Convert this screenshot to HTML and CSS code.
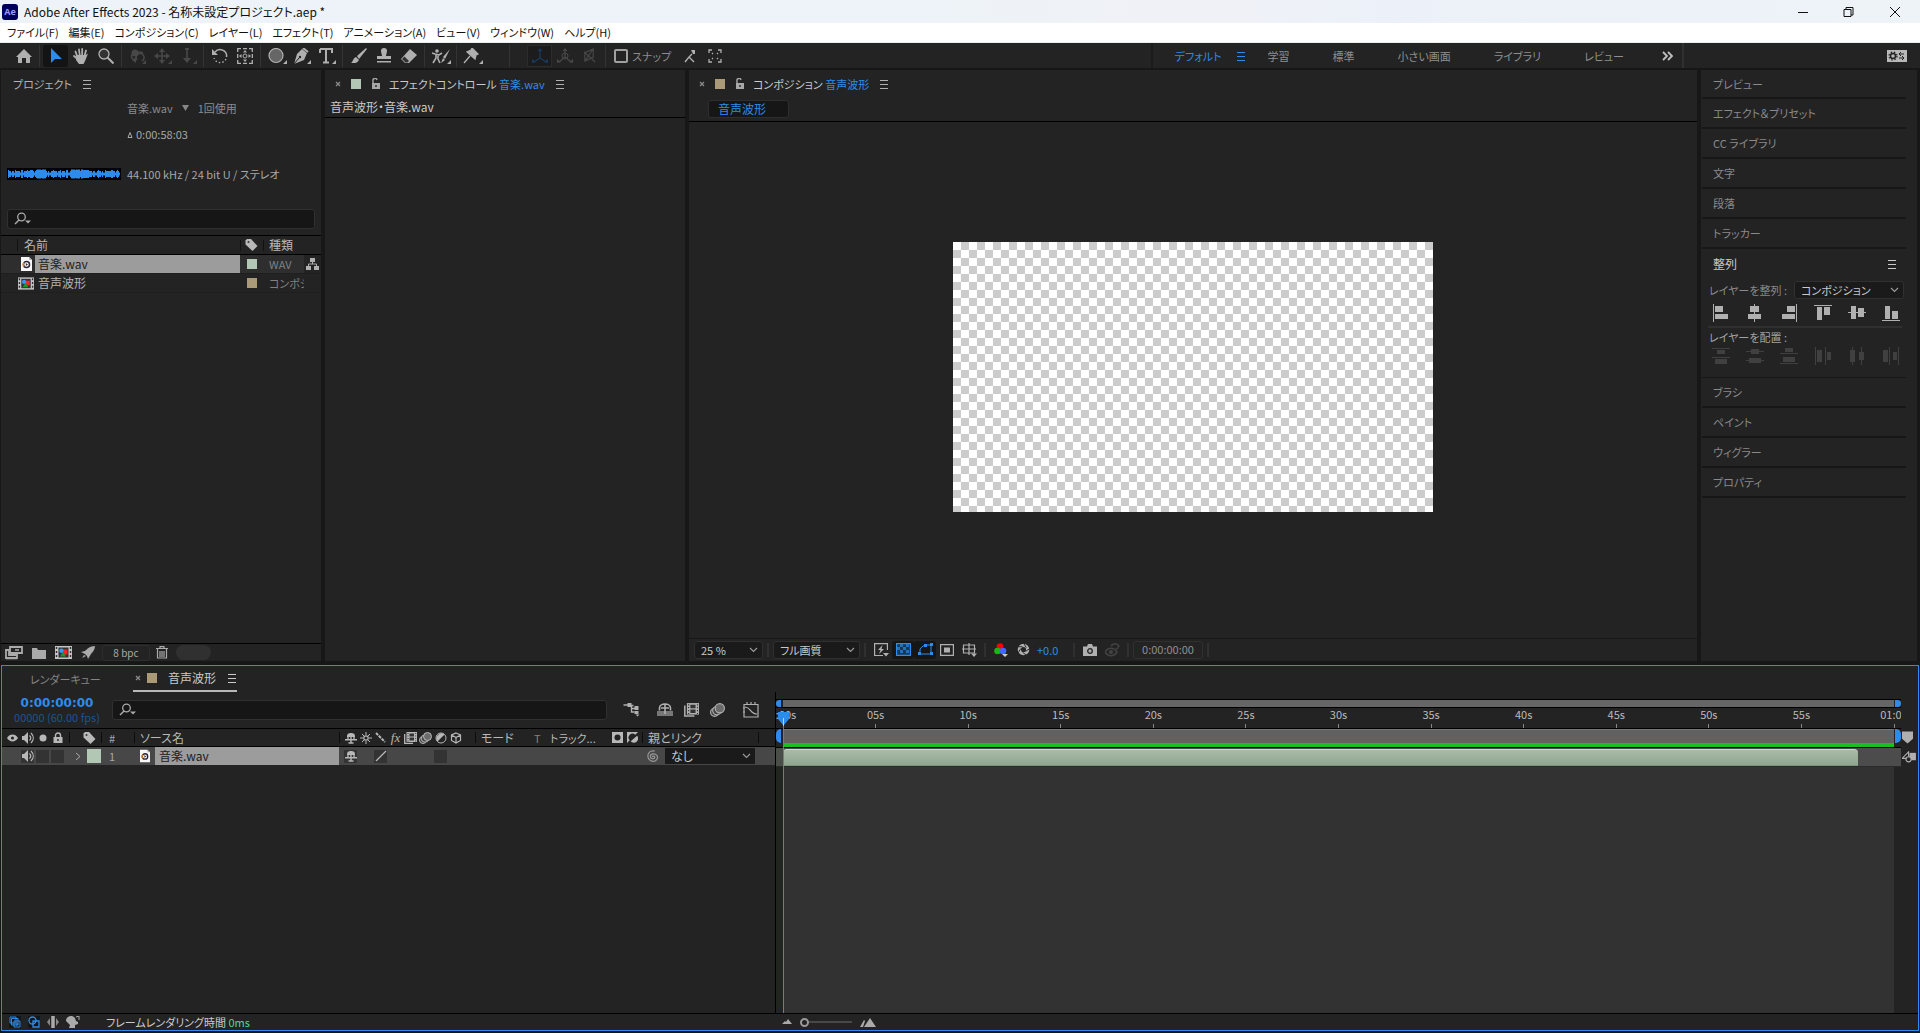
FILE: index.html
```html
<!DOCTYPE html>
<html lang="ja">
<head>
<meta charset="utf-8">
<title>Adobe After Effects 2023 - 名称未設定プロジェクト.aep *</title>
<link rel="stylesheet" href="styles.css">
</head>
<body>
<svg class="defs" aria-hidden="true">
  <symbol id="menu" viewBox="0 0 10 10"><path d="M1 1.500h8M1 5.500h8M1 9.500h8" stroke="currentColor"/></symbol>
  <symbol id="close" viewBox="0 0 10 10"><path d="M3 3l4 4M7 3l-4 4" stroke="currentColor" stroke-width="1.200"/></symbol>
  <symbol id="unlock" viewBox="0 0 10 12"><path d="M1 5h8v6H1z" fill="currentColor"/><path d="M2 5V3a2 2 0 0 1 4-1" fill="none" stroke="currentColor" stroke-width="1.400"/><path d="M5 7v2" stroke="#232323" stroke-width="1.400"/></symbol>
  <symbol id="lock" viewBox="0 0 10 12"><path d="M0.500 5h9v6h-9z" fill="currentColor"/><path d="M2.500 5V3.500a2.500 2.500 0 0 1 5 0V5" fill="none" stroke="currentColor" stroke-width="1.400"/><path d="M5 7v2" stroke="#232323" stroke-width="1.400"/></symbol>
  <symbol id="search" viewBox="0 0 18 14"><circle cx="7.500" cy="5" r="3.800" fill="none" stroke="currentColor" stroke-width="1.300"/><path d="M5 8l-4 4" stroke="currentColor" stroke-width="1.500"/><path d="M11 8.500h6l-3 3z" fill="currentColor"/></symbol>
  <symbol id="tag" viewBox="0 0 12 12"><path d="M0 1.500L1.500 0H5.500L12 7 7 12 0 5.500z" fill="currentColor"/><circle cx="3" cy="3" r="1" fill="#333"/></symbol>
  <symbol id="wavfile" viewBox="0 0 11 14"><path d="M0 0h8l3 3v11H0z" fill="#f8f8f8"/><path d="M8 0v3h3z" fill="#bbb"/><circle cx="5.500" cy="7.500" r="3" fill="#fff" stroke="#2a2038" stroke-width="1.500"/><path d="M3 9.500a3 3 0 0 1 0-4" fill="none" stroke="#e08030" stroke-width="1.300"/><path d="M4.800 6l2.200 1.500-2.200 1.500z" fill="#333"/></symbol>
  <symbol id="comp" viewBox="0 0 17 13"><path d="M0 0h17v13H0z" fill="#c4c4c4"/><path d="M3.500 1.500h10v10h-10z" fill="#333"/><path d="M1.500 1v12M15.500 1v12" stroke="#333" stroke-width="1.400" stroke-dasharray="2 2"/><path d="M8.500 3.500h4v5h-4z" fill="#f22"/><circle cx="6.500" cy="4.800" r="2.300" fill="#39f"/><path d="M5 10.500l3-5 3 5z" fill="#1a9a2a"/></symbol>
  <symbol id="home" viewBox="0 0 16 16"><path d="M8 1L0 9h2v6h4v-5h4v5h4V9h2z" fill="currentColor"/></symbol>
  <symbol id="arrow" viewBox="0 0 16 16"><path d="M3 0v15l4-4h7z" fill="currentColor"/></symbol>
  <symbol id="hand" viewBox="0 0 16 16"><path d="M4 8L2.500 3.500M6.700 7L6 1.500M9.200 7V1M11.500 8l1.500-5.500M4.500 11L1 8" stroke="currentColor" stroke-width="1.800" stroke-linecap="round"/><path d="M3.500 7h8.500l1.500-.500 1.500-1-2.500 6.500-2 4H6l-3-4z" fill="currentColor"/></symbol>
  <symbol id="zoom" viewBox="0 0 16 16"><circle cx="6" cy="6" r="5" fill="#333" stroke="currentColor" stroke-width="1.300"/><path d="M9.500 9.500l6 6" stroke="currentColor" stroke-width="2"/></symbol>
  <symbol id="orbit" viewBox="0 0 18 16"><path d="M14 5a7 4.500 0 1 0-9 7M8 12a4 4 0 1 1 5 1" fill="none" stroke="currentColor" stroke-width="1.500"/><circle cx="6" cy="5" r="3.500" fill="currentColor"/><path d="M7 9v6l-4-3zM17 12v4h-4z" fill="currentColor"/></symbol>
  <symbol id="pan" viewBox="0 0 18 16"><path d="M8 2v12M2 8h12" stroke="currentColor" stroke-width="1.600"/><path d="M8 0l3 4H5zM8 16l3-4H5zM0 8l4-3v6zM16 8l-4-3v6zM18 12v4h-4z" fill="currentColor"/></symbol>
  <symbol id="dolly" viewBox="0 0 18 16"><path d="M8 0v14" stroke="currentColor" stroke-width="1.600"/><path d="M4 10h8l-4 5zM6 0h4v2H6zM18 12v4h-4z" fill="currentColor"/></symbol>
  <symbol id="rotate" viewBox="0 0 16 16"><path d="M3 4a6.500 6.500 0 0 1 11.500 5" fill="none" stroke="currentColor" stroke-width="1.500"/><path d="M14 11a6.500 6.500 0 0 1-12-1" fill="none" stroke="currentColor" stroke-width="1.300" stroke-dasharray="1.500 2"/><path d="M0 1v6h6z" fill="currentColor"/></symbol>
  <symbol id="anchor" viewBox="0 0 16 16"><path d="M.700 4V.700H4M6 .700h4M12 .700h3.300V4M15.300 6v4M15.300 12v3.300H12M10 15.300H6M4 15.300H.700V12M.700 10V6" fill="none" stroke="currentColor" stroke-width="1.300"/><circle cx="8" cy="8" r="2" fill="none" stroke="currentColor"/><path d="M8 2l2 2.500H6zM8 14l2-2.500H6zM2 8l2.500-2v4zM14 8l-2.500-2v4z" fill="currentColor"/></symbol>
  <symbol id="ellipse" viewBox="0 0 20 16"><circle cx="9" cy="7.500" r="7" fill="#666" stroke="currentColor" stroke-width="1.200"/><path d="M20 12v4h-4z" fill="currentColor"/></symbol>
  <symbol id="pen" viewBox="0 0 18 16"><path d="M9 1l5 4-3 7-10 4 3-10z" fill="currentColor"/><path d="M10 0l6 5M1 16l5-6" stroke="#232323"/><path d="M10 0l5 4" stroke="currentColor" stroke-width="2"/><circle cx="7" cy="9" r="1.200" fill="#232323"/><path d="M18 12v4h-4z" fill="currentColor"/></symbol>
  <symbol id="type" viewBox="0 0 18 16"><path d="M2 1h12v4M2 5V1M8 1v13M5 14.500h6" fill="none" stroke="currentColor" stroke-width="2"/><path d="M18 12v4h-4z" fill="currentColor"/></symbol>
  <symbol id="brush" viewBox="0 0 16 16"><path d="M15 0L6 8l2 3 8-10z" fill="currentColor"/><path d="M5 9l3 3c-2 4-5 3-8 3 2-1 2-5 5-6z" fill="currentColor"/></symbol>
  <symbol id="stamp" viewBox="0 0 16 16"><path d="M5 3a3 3 0 0 1 6 0c0 2-1 3-1 5h5v3H1V8h5c0-2-1-3-1-5zM1 13h14v1.500H1z" fill="currentColor"/></symbol>
  <symbol id="eraser" viewBox="0 0 16 16"><path d="M9 1l7 6-8 8H4l-4-4z" fill="currentColor"/><path d="M3.500 8.500L8 13l-1.500 1.500H4.500L1 11z" fill="#333"/></symbol>
  <symbol id="roto" viewBox="0 0 20 16"><circle cx="6" cy="3" r="1.800" fill="currentColor"/><path d="M1 5l3 1 4 1 3-2M5 6v4l-3 5M7 7v4l2 4" fill="none" stroke="currentColor" stroke-width="1.600"/><path d="M19 1l-7 8 2 2zM12 10l2 2-4 3zM20 12v4h-4z" fill="currentColor"/></symbol>
  <symbol id="pin" viewBox="0 0 20 16"><path d="M9 0l6 6-2 1-1 4-8-7 4-2zM7 8L1 15" fill="currentColor" stroke="currentColor" stroke-width="1.300"/><path d="M20 12v4h-4z" fill="currentColor"/></symbol>
  <symbol id="axis" viewBox="0 0 16 16"><path d="M8 10V2M8 10l-6 4M8 10l6 4" fill="none" stroke="currentColor" stroke-width="1.300"/><path d="M8 0l2.500 3h-5zM0 15v-4l4 3zM16 15v-4l-4 3z" fill="currentColor"/></symbol>
  <symbol id="axisworld" viewBox="0 0 16 16"><circle cx="8" cy="8" r="3" fill="none" stroke="currentColor"/><path d="M8 9V2M8 9l-6 5M8 9l6 5" fill="none" stroke="currentColor" stroke-width="1.300"/><path d="M8 0l2.500 3h-5zM0 15v-4l4 3zM16 15v-4l-4 3z" fill="currentColor"/></symbol>
  <symbol id="axisview" viewBox="0 0 16 16"><path d="M2 4l9 8M12 1v9L3 14V5zM12 1L3 14M11 12l3 3" fill="none" stroke="currentColor" stroke-width="1.200"/></symbol>
  <symbol id="snapline" viewBox="0 0 14 14"><path d="M2 13l4-5 5 5M6 8l3-3" fill="none" stroke="currentColor" stroke-width="1.400"/><path d="M8 1h4v4h-2z" fill="currentColor"/></symbol>
  <symbol id="snapbox" viewBox="0 0 14 14"><path d="M1 4V1h3M10 1h3v3M13 10v3h-3M4 13H1v-3M5 5l-1-1M9 5l1-1M5 9l-1 1M9 9l1 1" fill="none" stroke="currentColor" stroke-width="1.300"/></symbol>
  <symbol id="more" viewBox="0 0 12 10"><path d="M1 1l4 4-4 4M6 1l4 4-4 4" fill="none" stroke="currentColor" stroke-width="1.800"/></symbol>
  <symbol id="sync" viewBox="0 0 20 12"><path d="M0 0h20v12H0z" fill="currentColor"/><circle cx="6" cy="6" r="2.500" fill="none" stroke="#232323" stroke-width="1.500"/><circle cx="6" cy="6" r="4" fill="none" stroke="#232323" stroke-width="1.200" stroke-dasharray="1.500 1.700"/><path d="M12 4h5M12 8h5M14 2l-2 2 2 2M15 6l2 2-2 2" fill="none" stroke="#232323"/></symbol>
  <symbol id="footage" viewBox="0 0 18 14"><path d="M5 1h12v6H5zM1 4h3v5h8v3H1z" fill="none" stroke="currentColor" stroke-width="1.800"/><path d="M10 4h4M1 12.500h11" stroke="currentColor" stroke-width="1.500"/></symbol>
  <symbol id="folder" viewBox="0 0 14 12"><path d="M0 1h5l1 2h8v9H0z" fill="currentColor"/></symbol>
  <symbol id="rocket" viewBox="0 0 14 13"><path d="M14 0C9 0 6 3 4 5L0 6l4 2 2 2 1 3 3-5c2-2 4-5 4-8zM3 9l-2 3 4-2z" fill="currentColor"/></symbol>
  <symbol id="trash" viewBox="0 0 12 13"><path d="M0 2.500h12M4 2V.700h4V2M1.500 3v9h9V3M4 5v6M6 5v6M8 5v6" fill="none" stroke="currentColor" stroke-width="1.200"/></symbol>
  <symbol id="net" viewBox="0 0 13 12"><path d="M4 0h5v4H4zM0 8h5v4H0zM8 8h5v4H8z" fill="currentColor"/><path d="M6.500 4v2M2.500 8V6h8v2" fill="none" stroke="currentColor"/></symbol>
  <symbol id="fast" viewBox="0 0 15 14"><path d="M9 12.500H.600V.600h12.800V7" fill="none" stroke="currentColor" stroke-width="1.200"/><path d="M8.500 2L4 7h2.500L5 11l5-5H7.500zM9 10h6l-3 3.500z" fill="currentColor"/></symbol>
  <symbol id="grid" viewBox="0 0 15 13"><path d="M.600.600h13.800v11.800H.600z" fill="#14375a" stroke="currentColor" stroke-width="1.200"/><path d="M4 1h3v3H4zM10 1h3v3h-3zM1 4h3v3H1zM7 4h3v3H7zM4 7h3v3H4zM10 7h3v3h-3z" fill="#2470bd"/></symbol>
  <symbol id="maskpath" viewBox="0 0 15 13"><path d="M2 11V6c2-3 5-4 6-4h5v9z" fill="none" stroke="currentColor"/><path d="M0 9h3v3H0zM12 9h3v3h-3zM12 0h3v3h-3zM6 1h3v3H6z" fill="currentColor"/></symbol>
  <symbol id="roi" viewBox="0 0 14 12"><path d="M.600.600h12.800v10.800H.600z" fill="none" stroke="currentColor" stroke-width="1.200"/><path d="M4 3.500h6v5H4z" fill="currentColor"/></symbol>
  <symbol id="guides" viewBox="0 0 15 14"><path d="M1.500 2h11v8h-11zM7 0v12M0 6h14" fill="none" stroke="currentColor" stroke-width="1.200"/><path d="M9 10.500h6l-3 3.500z" fill="currentColor"/></symbol>
  <symbol id="rgb" viewBox="0 0 14 14"><circle cx="6" cy="3.500" r="3.300" fill="#f00"/><circle cx="3.500" cy="8" r="3.300" fill="#1b1"/><circle cx="9" cy="8" r="3.300" fill="#46f"/><path d="M8 11h6l-3 3z" fill="#ccc"/></symbol>
  <symbol id="aperture" viewBox="0 0 14 14"><circle cx="7" cy="7" r="4.500" fill="none" stroke="currentColor" stroke-width="3.500"/><path d="M7 0l3 5M14 6l-5 3M10 13L6 10M1 11l3-5M1 4h5" stroke="#232323"/></symbol>
  <symbol id="camera" viewBox="0 0 14 12"><path d="M0 2.500h4L5 0h4l1 2.500h4V12H0z" fill="currentColor"/><circle cx="7" cy="7" r="2.300" fill="#aaa" stroke="#232323" stroke-width="1.300"/></symbol>
  <symbol id="showsnap" viewBox="0 0 15 14"><path d="M0 9c3-5 9-5 12 0-3 5-9 5-12 0z" fill="none" stroke="currentColor" stroke-width="1.500"/><circle cx="6" cy="9" r="2" fill="currentColor"/><path d="M6 3c2-3 6-3 8 0-1 2-2 3-3 3" fill="none" stroke="currentColor" stroke-width="1.500"/></symbol>
  <symbol id="eye" viewBox="0 0 12 8"><path d="M0 4c3-5 9-5 12 0-3 5-9 5-12 0z" fill="currentColor"/><circle cx="6" cy="4" r="1.700" fill="#232323"/></symbol>
  <symbol id="audio" viewBox="0 0 12 12"><path d="M0 4h2l4-4v12L2 8H0z" fill="currentColor"/><path d="M7.500 3.500c1.500 1.500 1.500 3.500 0 5M9 1c3 3 3 7 0 10" fill="none" stroke="currentColor" stroke-width="1.200"/></symbol>
  <symbol id="dot" viewBox="0 0 8 8"><circle cx="4" cy="4" r="3.500" fill="currentColor"/></symbol>
  <symbol id="shy" viewBox="0 0 12 12"><path d="M2 5V4a4 3 0 0 1 8 0v1zM0 7h12v1.500H0z" fill="currentColor"/><path d="M6 1v10M3.500 11h5M3 5v2M9 5v2" fill="none" stroke="currentColor" stroke-width="1.400"/></symbol>
  <symbol id="sun" viewBox="0 0 12 12"><circle cx="6" cy="6" r="2.200" fill="none" stroke="currentColor" stroke-width="1.200"/><path d="M6 0v3M6 9v3M0 6h3M9 6h3M2 2l2 2M8 8l2 2M10 2L8 4M4 8l-2 2" stroke="currentColor"/></symbol>
  <symbol id="qual" viewBox="0 0 12 12"><path d="M1 1l9 9" stroke="currentColor" stroke-width="2" stroke-dasharray="3 1"/></symbol>
  <symbol id="slash" viewBox="0 0 12 12"><path d="M1 11L11 1" stroke="currentColor" stroke-width="1.300"/></symbol>
  <symbol id="film" viewBox="0 0 13 12"><path d="M.700 2v9.300H9" fill="none" stroke="currentColor" stroke-width="1.300"/><path d="M2.500 0H13v10H2.500z" fill="currentColor"/><path d="M5.500 1.500h4.500v3H5.500zM5.500 5.500h4.500v3H5.500z" fill="#333"/><path d="M4 1v9M11.700 1v9" stroke="#333" stroke-dasharray="1 1.500"/></symbol>
  <symbol id="blur" viewBox="0 0 13 12"><circle cx="4" cy="8" r="3.500" fill="#444" stroke="currentColor"/><circle cx="6" cy="6.500" r="3.700" fill="#444" stroke="currentColor"/><circle cx="8.500" cy="4.500" r="4" fill="#6c6c6c" stroke="currentColor"/></symbol>
  <symbol id="adjust" viewBox="0 0 12 12"><circle cx="6" cy="6" r="5" fill="#232323" stroke="currentColor"/><path d="M9.500 2.500a5 5 0 0 0-7 7z" fill="currentColor"/></symbol>
  <symbol id="cube" viewBox="0 0 12 12"><path d="M6 1l4.500 2v5.500L6 11 1.500 8.500V3zM1.500 3L6 5.500 10.500 3M6 5.500V11" fill="none" stroke="currentColor" stroke-width="1.200"/></symbol>
  <symbol id="matte" viewBox="0 0 12 12"><path d="M0 0h12v12H0z" fill="currentColor"/><circle cx="6" cy="6" r="3.300" fill="#232323"/></symbol>
  <symbol id="invert" viewBox="0 0 12 12"><path d="M0 0h12L9 3a4 4 0 0 0-6 6l-3 3z" fill="currentColor"/><path d="M11 4a4 4 0 0 1-7 6z" fill="currentColor"/></symbol>
  <symbol id="spiral" viewBox="0 0 12 12"><path d="M6 6.500c0-1.500 2.500-1 2 .500S4 8.500 4 6s4-3.500 6-1-1 6-4 5.500S1 7 2 4s4-3.500 6-3" fill="none" stroke="currentColor" stroke-width="1.100"/></symbol>
  <symbol id="flow" viewBox="0 0 16 14"><path d="M0 2h5M6 2.500h4M8 3v6h3M8 5.500h4" stroke="currentColor" stroke-width="1.400" fill="none"/><path d="M4 0h4v4H4zM11 3h4v4h-4zM11 8h4v3h-4zM12 11.500h4l-2 2z" fill="currentColor"/></symbol>
  <symbol id="shyall" viewBox="0 0 16 14"><path d="M0 8h16v5H0z" fill="#777"/><path d="M2.500 7.500V5a5.500 4 0 0 1 11 0v2.500M4 5h8M8 1v10" fill="none" stroke="currentColor" stroke-width="1.600"/></symbol>
  <symbol id="graph" viewBox="0 0 16 16"><path d="M1 2.500h14V15H1zM4 0v3M8 0v3M12 0v3M0 6h2M0 10h2M2 5c6 0 5 7 12 7" fill="none" stroke="currentColor" stroke-width="1.200"/></symbol>
  <symbol id="marker" viewBox="0 0 12 14"><path d="M0 1h12v8l-6 5-6-5z" fill="currentColor"/></symbol>
  <symbol id="compbtn" viewBox="0 0 15 13"><path d="M8 2h7v8H8z" fill="currentColor"/><path d="M0 8h6M0 8l7-7v5" fill="none" stroke="currentColor" stroke-width="1.200"/><circle cx="7" cy="9" r="2.800" fill="#232323" stroke="currentColor" stroke-width="1.200"/></symbol>
  <symbol id="layers" viewBox="0 0 12 12"><path d="M1 1h6v6H1zM2.500 2.500h6.500V9H2.500zM5 5h6v6H5z" fill="#161616" stroke="currentColor"/><path d="M6.500 8h3M8 6.500v3" stroke="currentColor"/></symbol>
  <symbol id="modes" viewBox="0 0 12 12"><circle cx="4.500" cy="4.500" r="3.500" fill="none" stroke="currentColor" stroke-width="1.300"/><path d="M5 5h6v6H5z" fill="none" stroke="currentColor" stroke-width="1.300"/><path d="M5 8a4 4 0 0 0 3-3z" fill="currentColor"/></symbol>
  <symbol id="brackets" viewBox="0 0 12 12"><path d="M4 0h4v12H4z" fill="#888"/><path d="M3 2v8L0 6zM9 2v8l3-4z" fill="#888"/><path d="M5 0h2v12H5z" fill="currentColor"/></symbol>
  <symbol id="snail" viewBox="0 0 14 12"><path d="M0 5a5 5 0 0 1 9-3l1 3 2 1v2l-3 1v3H3l1-3z" fill="currentColor"/><path d="M10 1l3-1v4" stroke="currentColor" fill="none"/></symbol>
  <symbol id="hill1" viewBox="0 0 10 6"><path d="M0 5l3-3 1 1 2-3 4 5z" fill="currentColor"/></symbol>
  <symbol id="hill2" viewBox="0 0 16 9"><path d="M0 9l4-7 1 1-2 6zM4 9l6-9 6 9z" fill="currentColor"/></symbol>
  <symbol id="a-left" viewBox="0 0 18 18"><path d="M1.500 0v18" stroke="currentColor"/><path d="M3 2h8v6H3zM3 10h13v5H3z" fill="currentColor"/></symbol>
  <symbol id="a-cen" viewBox="0 0 18 18"><path d="M8.500 0v18" stroke="currentColor"/><path d="M4 2h9v6H4zM2 10h13v5H2z" fill="currentColor"/></symbol>
  <symbol id="a-right" viewBox="0 0 18 18"><path d="M16.500 0v18" stroke="currentColor"/><path d="M7 2h8v6H7zM2 10h13v5H2z" fill="currentColor"/></symbol>
  <symbol id="a-top" viewBox="0 0 18 18"><path d="M0 1.500h18" stroke="currentColor"/><path d="M3 3h5v13H3zM10 3h6v8h-6z" fill="currentColor"/></symbol>
  <symbol id="a-mid" viewBox="0 0 18 18"><path d="M0 8.500h18" stroke="currentColor"/><path d="M3 2h5v13H3zM10 4h6v9h-6z" fill="currentColor"/></symbol>
  <symbol id="a-bot" viewBox="0 0 18 18"><path d="M0 16.500h18" stroke="currentColor"/><path d="M3 2h5v13H3zM10 7h6v8h-6z" fill="currentColor"/></symbol>
  <symbol id="d-top" viewBox="0 0 18 18"><path d="M0 1.500h18M0 10.500h18" stroke="currentColor"/><path d="M5 3h8v4H5zM3 12h12v5H3z" fill="currentColor"/></symbol>
  <symbol id="d-mid" viewBox="0 0 18 18"><path d="M0 4.500h18M0 13.500h18" stroke="currentColor"/><path d="M5 2h8v5H5zM3 11h12v5H3z" fill="currentColor"/></symbol>
  <symbol id="d-bot" viewBox="0 0 18 18"><path d="M0 6.500h18M0 16.500h18" stroke="currentColor"/><path d="M5 1h8v4H5zM3 10h12v5H3z" fill="currentColor"/></symbol>
  <symbol id="d-left" viewBox="0 0 18 18"><path d="M1.500 0v18M11.500 0v18" stroke="currentColor"/><path d="M3 3h5v12H3zM13 5h4v8h-4z" fill="currentColor"/></symbol>
  <symbol id="d-cen" viewBox="0 0 18 18"><path d="M4.500 0v18M13.500 0v18" stroke="currentColor"/><path d="M2 3h5v12H2zM11 5h5v8h-5z" fill="currentColor"/></symbol>
  <symbol id="d-right" viewBox="0 0 18 18"><path d="M7.500 0v18M16.500 0v18" stroke="currentColor"/><path d="M1 3h5v12H1zM11 5h4v8h-4z" fill="currentColor"/></symbol>
</svg>

<header class="titlebar">
  <span class="app-logo">Ae</span>
  <h1 class="app-title">Adobe After Effects 2023 - 名称未設定プロジェクト.aep *</h1>
  <div class="window-buttons">
    <button aria-label="最小化"><svg width="12" height="12"><path d="M1 6.500h10" stroke="#111"/></svg></button>
    <button aria-label="元に戻す"><svg width="12" height="12"><path d="M1 3.500h7v7H1zM3 3V1.500h7V9H8" fill="none" stroke="#111"/></svg></button>
    <button aria-label="閉じる"><svg width="12" height="12"><path d="M1 1l10 10M11 1L1 11" stroke="#111"/></svg></button>
  </div>
</header>
<nav class="menubar">
  <button>ファイル(F)</button><button>編集(E)</button><button>コンポジション(C)</button><button>レイヤー(L)</button><button>エフェクト(T)</button><button>アニメーション(A)</button><button>ビュー(V)</button><button>ウィンドウ(W)</button><button>ヘルプ(H)</button>
</nav>

<div class="toolbar">
  <button class="tool" aria-label="ホーム"><svg width="16" height="16"><use href="#home"/></svg></button><i class="sep"></i>
  <button class="tool active" aria-label="選択"><svg width="16" height="16"><use href="#arrow"/></svg></button>
  <button class="tool" aria-label="手のひら"><svg width="16" height="16"><use href="#hand"/></svg></button>
  <button class="tool" aria-label="ズーム"><svg width="16" height="16"><use href="#zoom"/></svg></button><i class="sep"></i>
  <button class="tool off" aria-label="周回"><svg width="18" height="16"><use href="#orbit"/></svg></button>
  <button class="tool off" aria-label="パン"><svg width="18" height="16"><use href="#pan"/></svg></button>
  <button class="tool off" aria-label="ドリー"><svg width="18" height="16"><use href="#dolly"/></svg></button><i class="sep"></i>
  <button class="tool" aria-label="回転"><svg width="16" height="16"><use href="#rotate"/></svg></button>
  <button class="tool" aria-label="アンカーポイント"><svg width="16" height="16"><use href="#anchor"/></svg></button><i class="sep"></i>
  <button class="tool" aria-label="楕円形"><svg width="20" height="16"><use href="#ellipse"/></svg></button>
  <button class="tool" aria-label="ペン"><svg width="18" height="16"><use href="#pen"/></svg></button>
  <button class="tool" aria-label="文字"><svg width="18" height="16"><use href="#type"/></svg></button><i class="sep"></i>
  <button class="tool" aria-label="ブラシ"><svg width="16" height="16"><use href="#brush"/></svg></button>
  <button class="tool" aria-label="コピースタンプ"><svg width="16" height="16"><use href="#stamp"/></svg></button>
  <button class="tool" aria-label="消しゴム"><svg width="16" height="16"><use href="#eraser"/></svg></button><i class="sep"></i>
  <button class="tool" aria-label="ロトブラシ"><svg width="20" height="16"><use href="#roto"/></svg></button><i class="sep"></i>
  <button class="tool" aria-label="パペットピン"><svg width="20" height="16"><use href="#pin"/></svg></button>
  <i class="sep wide"></i>
  <button class="tool axis on" aria-label="ローカル軸"><svg width="16" height="16"><use href="#axis"/></svg></button>
  <button class="tool off" aria-label="ワールド軸"><svg width="16" height="16"><use href="#axisworld"/></svg></button>
  <button class="tool off" aria-label="ビュー軸"><svg width="15" height="15"><use href="#axisview"/></svg></button><i class="sep"></i>
  <label class="snap"><input type="checkbox">スナップ</label>
  <button class="tool" aria-label="スナップ 延長"><svg width="14" height="14"><use href="#snapline"/></svg></button>
  <button class="tool" aria-label="スナップ 内部"><svg width="14" height="14"><use href="#snapbox"/></svg></button>
  <div class="workspaces">
    <button class="current">デフォルト <svg width="10" height="10"><use href="#menu"/></svg></button><button>学習</button><button>標準</button><button>小さい画面</button><button>ライブラリ</button><button>レビュー</button><button class="more" aria-label="その他"><svg width="12" height="10"><use href="#more"/></svg></button>
  </div>
  <button class="sync" aria-label="設定を同期"><svg width="20" height="12"><use href="#sync"/></svg></button>
</div>

<main class="workspace">
  <section class="panel project">
    <div class="tabs"><span class="tab">プロジェクト</span><svg class="burger" width="10" height="10"><use href="#menu"/></svg></div>
    <div class="info">
      <p class="info-name"><span>音楽.wav</span><svg width="7" height="6"><path d="M0 0h7L3.500 6z" fill="#888"/></svg><span>1回使用</span></p>
      <p class="info-time"><svg width="6" height="7"><path d="M1 6.500h4L3 1.500z" fill="none" stroke="#aaa"/></svg>0:00:58:03</p>
      <div class="info-audio">
        <svg class="wave" width="114" height="12"><g stroke="#2d8ceb"><path d="M1 6h112" stroke-width="3"/><path d="M1 6h112" stroke-width="6" stroke-dasharray="3 1 2 2 4 1 1 2 6 1 3 1"/><path d="M1 6h112" stroke-width="8" stroke-dasharray="1 6 1 5 2 4 1 2 3 3 8 9"/><path d="M30 6h9M64 6h12" stroke-width="9" stroke-dasharray="4 1"/></g></svg>
        <span>44.100 kHz / 24 bit U / ステレオ</span>
      </div>
    </div>
    <label class="search"><svg width="18" height="14"><use href="#search"/></svg><input type="text" aria-label="プロジェクトを検索"></label>
    <table class="items">
      <colgroup><col><col class="c-tag"><col class="c-kind"><col class="c-net"></colgroup>
      <thead><tr><th><div class="name-head">名前</div></th><th><svg width="13" height="12"><use href="#tag"/></svg></th><th>種類</th><th></th></tr></thead>
      <tbody>
        <tr class="selected"><td><div class="file"><svg width="11" height="14"><use href="#wavfile"/></svg><span>音楽.wav</span></div></td><td><i class="swatch green"></i></td><td class="kind">WAV</td><td class="net"><svg width="13" height="12"><use href="#net"/></svg></td></tr>
        <tr><td><div class="file comp"><svg width="16" height="13"><use href="#comp"/></svg><span>音声波形</span></div></td><td><i class="swatch sand"></i></td><td class="kind">コンポジ</td><td></td></tr>
      </tbody>
    </table>
    <div class="project-foot">
      <button aria-label="フッテージを変換"><svg width="18" height="14"><use href="#footage"/></svg></button>
      <button aria-label="新規フォルダー"><svg width="14" height="12"><use href="#folder"/></svg></button>
      <button aria-label="新規コンポジション"><svg width="17" height="13"><use href="#comp"/></svg></button>
      <button aria-label="プロジェクト設定"><svg width="14" height="13"><use href="#rocket"/></svg></button>
      <button class="bpc">8 bpc</button>
      <button aria-label="削除"><svg width="12" height="13"><use href="#trash"/></svg></button>
      <i class="pill"></i>
    </div>
  </section>

  <section class="panel effects">
    <div class="tabs"><svg class="x" width="10" height="10"><use href="#close"/></svg><i class="swatch green"></i><svg class="lk" width="10" height="12"><use href="#unlock"/></svg><span class="tab lit">エフェクトコントロール <b>音楽.wav</b></span><svg class="burger" width="10" height="10"><use href="#menu"/></svg></div>
    <p class="effects-path">音声波形・音楽.wav</p>
  </section>

  <section class="panel viewer">
    <div class="tabs"><svg class="x" width="10" height="10"><use href="#close"/></svg><i class="swatch sand"></i><svg class="lk" width="10" height="12"><use href="#unlock"/></svg><span class="tab lit">コンポジション <b>音声波形</b></span><svg class="burger" width="10" height="10"><use href="#menu"/></svg></div>
    <div class="crumbs"><button>音声波形</button></div>
    <div class="stage"><div class="canvas"></div></div>
    <div class="viewer-foot">
      <select class="zoom-level" aria-label="拡大率"><option>25 %</option></select><i class="bar"></i>
      <select class="quality" aria-label="解像度"><option>フル画質</option></select><i class="bar"></i>
      <button class="vb" aria-label="高速プレビュー"><svg width="15" height="14"><use href="#fast"/></svg></button>
      <button class="vb on" aria-label="透明グリッド"><svg width="15" height="13"><use href="#grid"/></svg></button>
      <button class="vb on" aria-label="マスク表示"><svg width="15" height="13"><use href="#maskpath"/></svg></button>
      <button class="vb" aria-label="目標範囲"><svg width="14" height="12"><use href="#roi"/></svg></button>
      <button class="vb" aria-label="グリッドとガイド"><svg width="15" height="14"><use href="#guides"/></svg></button><i class="bar"></i>
      <button class="vb" aria-label="チャンネル"><svg width="14" height="14"><use href="#rgb"/></svg></button>
      <button class="vb" aria-label="露出をリセット"><svg width="13" height="13"><use href="#aperture"/></svg></button>
      <button class="exposure">+0.0</button><i class="bar"></i>
      <button class="vb" aria-label="スナップショット"><svg width="14" height="12"><use href="#camera"/></svg></button>
      <button class="vb off" aria-label="スナップショットを表示"><svg width="15" height="14"><use href="#showsnap"/></svg></button><i class="bar"></i>
      <button class="timebox">0:00:00:00</button><i class="bar"></i>
    </div>
  </section>

  <aside class="panel side">
    <button class="side-tab">プレビュー</button>
    <button class="side-tab">エフェクト＆プリセット</button>
    <button class="side-tab">CC ライブラリ</button>
    <button class="side-tab">文字</button>
    <button class="side-tab">段落</button>
    <button class="side-tab">トラッカー</button>
    <div class="align">
      <div class="align-head"><span>整列</span><svg width="10" height="10"><use href="#menu"/></svg></div>
      <div class="align-to"><label for="align-to">レイヤーを整列 :</label><select id="align-to"><option>コンポジション</option></select></div>
      <div class="align-row">
        <button aria-label="左揃え"><svg width="18" height="18"><use href="#a-left"/></svg></button><button aria-label="水平中央"><svg width="18" height="18"><use href="#a-cen"/></svg></button><button aria-label="右揃え"><svg width="18" height="18"><use href="#a-right"/></svg></button><button aria-label="上揃え"><svg width="18" height="18"><use href="#a-top"/></svg></button><button aria-label="垂直中央"><svg width="18" height="18"><use href="#a-mid"/></svg></button><button aria-label="下揃え"><svg width="18" height="18"><use href="#a-bot"/></svg></button>
      </div>
      <p class="distribute">レイヤーを配置 :</p>
      <div class="align-row off">
        <button aria-label="上を配置" disabled><svg width="18" height="18"><use href="#d-top"/></svg></button><button aria-label="垂直に配置" disabled><svg width="18" height="18"><use href="#d-mid"/></svg></button><button aria-label="下を配置" disabled><svg width="18" height="18"><use href="#d-bot"/></svg></button><button aria-label="左を配置" disabled><svg width="18" height="18"><use href="#d-left"/></svg></button><button aria-label="水平に配置" disabled><svg width="18" height="18"><use href="#d-cen"/></svg></button><button aria-label="右を配置" disabled><svg width="18" height="18"><use href="#d-right"/></svg></button>
      </div>
    </div>
    <button class="side-tab">ブラシ</button>
    <button class="side-tab">ペイント</button>
    <button class="side-tab">ウィグラー</button>
    <button class="side-tab">プロパティ</button>
  </aside>
</main>

<section class="timeline">
  <div class="tl-tabs">
    <button class="queue">レンダーキュー</button>
    <div class="tl-tab"><svg width="10" height="10"><use href="#close"/></svg><i class="swatch sand"></i><span>音声波形</span><svg width="10" height="10"><use href="#menu"/></svg></div>
  </div>
  <div class="tl-body">
    <div class="tl-left">
      <div class="tl-head">
        <div class="clock"><strong>0:00:00:00</strong><span>00000 (60.00 fps)</span></div>
        <label class="search"><svg width="18" height="14"><use href="#search"/></svg><input type="text" aria-label="レイヤーを検索"></label>
        <div class="tl-switches">
          <button aria-label="ミニフローチャート"><svg width="17" height="14"><use href="#flow"/></svg></button>
          <button aria-label="シャイ"><svg width="16" height="14"><use href="#shyall"/></svg></button>
          <button aria-label="フレームブレンド"><svg width="15" height="14"><use href="#film"/></svg></button>
          <button aria-label="モーションブラー"><svg width="15" height="14"><use href="#blur"/></svg></button>
          <button aria-label="グラフエディター"><svg width="16" height="16"><use href="#graph"/></svg></button>
        </div>
      </div>
      <table class="layers">
        <colgroup><col class="w-av"><col class="w-tag"><col class="w-num"><col><col class="w-sw"><col class="w-mode"><col class="w-t"><col class="w-track"><col class="w-parent"><col class="w-end"></colgroup>
        <thead><tr>
          <th><div class="av"><svg width="11" height="8"><use href="#eye"/></svg><svg width="12" height="12"><use href="#audio"/></svg><svg width="8" height="8"><use href="#dot"/></svg><svg width="10" height="12"><use href="#lock"/></svg></div></th>
          <th><div class="tagcell"><svg width="13" height="12"><use href="#tag"/></svg></div></th>
          <th class="num">#</th><th class="src">ソース名</th>
          <th><div class="sw"><svg width="12" height="12"><use href="#shy"/></svg><svg width="12" height="12"><use href="#sun"/></svg><svg width="12" height="12"><use href="#qual"/></svg><em>fx</em><svg width="13" height="12"><use href="#film"/></svg><svg width="13" height="12"><use href="#blur"/></svg><svg width="12" height="12"><use href="#adjust"/></svg><svg width="12" height="12"><use href="#cube"/></svg></div></th>
          <th class="src plain">モード</th><th class="t plain">T</th>
          <th class="plain"><div class="track-head"><span>トラック...</span><svg width="11" height="11"><use href="#matte"/></svg><svg width="11" height="11"><use href="#invert"/></svg></div></th>
          <th class="src">親とリンク</th><th></th>
        </tr></thead>
        <tbody><tr>
          <td><div class="av boxes"><span></span><span class="box"><svg width="12" height="12"><use href="#audio"/></svg></span><span class="box"></span><span class="box"></span></div></td>
          <td><div class="tagcell filled"><svg width="6" height="9"><path d="M1 1l4 3.500L1 8" fill="none" stroke="#aaa"/></svg><i></i></div></td>
          <td class="num">1</td>
          <td><div class="file"><svg width="10" height="14"><use href="#wavfile"/></svg><span>音楽.wav</span></div></td>
          <td><div class="sw boxes"><span class="box"><svg width="12" height="12"><use href="#shy"/></svg></span><span></span><span class="box"><svg width="12" height="12"><use href="#slash"/></svg></span><span></span><span></span><span></span><span class="box"></span><span></span></div></td>
          <td></td><td></td><td></td>
          <td><div class="parent"><svg width="13" height="13"><use href="#spiral"/></svg><select aria-label="親とリンク"><option>なし</option></select></div></td><td></td>
        </tr></tbody>
      </table>
    </div>
    <div class="tl-right">
      <div class="navigator"><i class="cap"></i><i class="range"></i><i class="cap end"></i></div>
      <div class="ruler"><span>0:00s</span><span>05s</span><span>10s</span><span>15s</span><span>20s</span><span>25s</span><span>30s</span><span>35s</span><span>40s</span><span>45s</span><span>50s</span><span>55s</span><span class="last">01:00</span></div>
      <div class="workarea"><i class="cap"></i><i class="range"></i><i class="cap end"></i></div>
      <div class="layer-track"><i class="clip" style="width: 96.8%"></i></div>
      <div class="empty-track"></div>
      <div class="playhead"><svg width="11" height="14"><path d="M0 0h11v7l-5 6h-1L0 7z" fill="#2d8ceb"/><path d="M5.500 6v8" stroke="#ccc"/></svg></div>
    </div>
    <div class="tl-gutter"><button aria-label="マーカー"><svg width="11" height="14"><use href="#marker"/></svg></button><button aria-label="コンポジション"><svg width="14" height="12"><use href="#compbtn"/></svg></button></div>
  </div>
  <div class="tl-foot">
    <button class="blue" aria-label="スイッチ"><svg width="12" height="12"><use href="#layers"/></svg></button>
    <button class="blue" aria-label="転送制御"><svg width="12" height="12"><use href="#modes"/></svg></button>
    <button aria-label="イン/アウト"><svg width="12" height="12"><use href="#brackets"/></svg></button>
    <button aria-label="レンダリング時間"><svg width="14" height="12"><use href="#snail"/></svg></button>
    <p class="render">フレームレンダリング時間 <span>0ms</span></p>
    <div class="scale"><svg width="10" height="6"><use href="#hill1"/></svg><input type="range" value="0" aria-label="タイムライン拡大"><svg width="16" height="9"><use href="#hill2"/></svg></div>
  </div>
</section>
</body>
</html>
```
FILE: styles.css
```css
:root {
  --bg: #232323;
  --gap: #171717;
  --text: #a2a2a2;
  --lit: #cacaca;
  --blue: #2d8ceb;
  --green: #b3c8b4;
  --sand: #ab9a77;
}
* { box-sizing: border-box; }
body {
  margin: 0;
  min-height: 100vh;
  display: flex;
  flex-direction: column;
  background: var(--gap);
  color: var(--text);
  font: 12px/16px "Noto Sans CJK JP", sans-serif;
  font-feature-settings: "palt";
  padding-bottom: 2px;
  overflow-x: hidden;
}
p, h1 { margin: 0; }
svg { display: block; flex: none; }
i { display: block; flex: none; font-style: normal; }
.defs { position: absolute; width: 0; height: 0; }
button, select, input { font: inherit; font-feature-settings: inherit; color: inherit; border: 0; padding: 0; margin: 0; background: none; }
input[type="text"] { flex: 1; min-width: 0; height: 100%; outline: 0; }

.titlebar { display: flex; align-items: center; height: 23px; padding-left: 2px; background: linear-gradient(90deg, #edf3f8 0 48%, #f0f1f6 62%, #ecf1f9 72%, #edf3f7); color: #111; }
.app-logo { width: 16px; height: 16px; border-radius: 3px; background: #00005b; color: #9999ff; font: bold 9px/16px "Open Sans", sans-serif; text-align: center; }
.app-title { margin-left: 6px; font-size: 12px; font-weight: 400; line-height: 20px; }
.window-buttons { display: flex; margin-left: auto; padding-right: 2px; }
.window-buttons button { width: 46px; height: 20px; display: grid; place-items: center; }
.menubar { display: flex; gap: 10px; height: 20px; padding-left: 7px; background: #fff; color: #111; border-bottom: 1px solid #e8eeee; font-size: 11px; }
.menubar button { white-space: nowrap; height: 18px; }

.toolbar { display: flex; align-items: center; height: 25px; padding-left: 11px; background: var(--bg); color: #b0b0b0; }
.tool { width: 25px; height: 22px; display: grid; place-items: center; flex: none; }
.tool.active { background: #141414; border-radius: 3px; color: var(--blue); }
.tool.off { color: #484848; }
.tool.axis { color: #173b60; background: #1c1c1c; border: 1px solid #2c2c2c; }
.sep { width: 1px; height: 22px; margin: 0 3px; background: #343434; }
.sep.wide { margin: 0 17px 0 24px; }
.snap { display: flex; align-items: center; gap: 4px; margin: 0 6px 0 5px; font-size: 11px; color: #8c8c8c; white-space: nowrap; }
.snap input { appearance: none; width: 14px; height: 14px; border: 2px solid #a0a0a0; border-radius: 2px; }
.workspaces { display: flex; align-items: center; margin-left: auto; height: 25px; padding: 0 8px 0 22px; gap: 43px; border-left: 2px solid #1b1b1b; border-right: 2px solid #303030; color: #8f8f8f; font-size: 11px; }
.workspaces button { display: flex; align-items: center; gap: 14px; white-space: nowrap; }
.workspaces .current { color: var(--blue); margin-right: -21px; }
.workspaces .more { color: #c0c0c0; margin-left: -5px; }
.sync { margin: 0 13px 0 203px; color: #b8b8b8; }

.workspace { flex: 591 1 0; display: grid; grid-template-columns: 320px 360px minmax(0, 1fr) 216px; gap: 4px; padding: 2px 3px 4px 1px; }
.panel { display: flex; flex-direction: column; min-width: 0; background: var(--bg); }
.tabs { display: flex; align-items: center; height: 27px; flex: none; padding: 0 5px 0 12px; }
.tab { font-size: 11px; color: #b4b4b4; white-space: nowrap; }
.tab.lit { color: var(--lit); margin-left: 8px; }
.tab b { color: var(--blue); font-weight: 400; }
.burger { margin-left: 10px; color: #b0b0b0; }
.swatch { width: 10px; height: 10px; }
.swatch.green { background: var(--green); }
.swatch.sand { background: var(--sand); }
.effects .tabs, .viewer .tabs { padding-left: 8px; }
.tabs .x { color: #8c8c8c; }
.tabs .swatch { margin: 0 10px 0 8px; }
.lk { color: #a8a8a8; }

.info { padding: 1px 6px 0; height: 112px; color: #8c8c8c; font-size: 11px; }
.info-name, .info-time { display: flex; align-items: center; gap: 9px; height: 20px; padding-left: 120px; }
.info-time { gap: 3px; margin-top: 6px; color: #a8a8a8; }
.info-audio { display: flex; align-items: center; gap: 6px; margin-top: 22px; color: #a8a8a8; white-space: nowrap; }
.wave { background: #000; }
.search { display: flex; align-items: center; height: 20px; padding-left: 6px; background: #161616; border: 1px solid #303030; border-radius: 3px; color: #aaa; }
.project .search { margin: 0 6px; }

table { width: 100%; table-layout: fixed; border-collapse: collapse; }
th, td { height: 18px; padding: 0; text-align: left; font-weight: 400; white-space: nowrap; overflow: hidden; line-height: 16px; }
thead tr { border-top: 1px solid #000; border-bottom: 1px solid #000; color: #b8b8b8; }
.items { margin-top: 6px; }
.items th { height: 19px; }
.c-tag { width: 23px; }
.c-kind { width: 41px; }
.c-net { width: 17px; }
.items th:nth-child(2) svg { margin-left: 5px; }
.items th { background: linear-gradient(#111, #111) 0 50% / 1px 11px no-repeat; }
.items th:first-child, .items th:last-child { background: none; }
.name-head { margin-left: 16px; padding-left: 6px; line-height: 12px; border-left: 1px solid #111; }
.items th:nth-child(3), .items .kind { padding-left: 6px; }
.items .kind { color: #808080; font-size: 11px; }
.items td .swatch { margin-left: 7px; }
.items tbody tr { border-bottom: 1px solid #1f1f1f; }
.items .selected { background: #2e2e2e; }
.items .net { background: var(--bg); color: #b0b0b0; }
.net svg { margin-left: 2px; }
.file { display: flex; align-items: center; height: 18px; padding-left: 20px; gap: 3px; color: #b4b4b4; }
.file.comp { padding-left: 17px; gap: 1px; }
.file span { flex: 1; padding-left: 3px; }
.selected .file span, .layers .file span { background: #9c9c9c; color: #1c1c1c; line-height: 18px; }
.project-foot { display: flex; align-items: center; gap: 9px; height: 18px; margin-top: auto; padding-left: 4px; border-top: 1px solid #000; color: #aaa; }
.bpc { width: 48px; height: 16px; margin: 0 -3px 0 -2px; line-height: 14px; border: 1px solid #2e2e2e; border-radius: 3px; font-size: 10px; }
.pill { width: 35px; height: 15px; border-radius: 8px; background: #303030; margin-left: -1px; }

.effects-path { padding: 3px 5px 0; height: 21px; border-bottom: 1px solid #000; color: var(--lit); line-height: 14px; }
.crumbs { height: 25px; padding: 3px 0 0 19px; border-bottom: 1px solid #000; flex: none; }
.crumbs button { display: block; width: 81px; height: 18px; padding-left: 9px; text-align: left; line-height: 14px; background: #161616; border: 1px solid #2e2e2e; border-radius: 3px; color: var(--blue); }
.stage { flex: 1; display: grid; place-items: center; padding-bottom: 6px; }
.canvas { width: 480px; max-width: 90%; aspect-ratio: 16 / 9; background: conic-gradient(#ccc 25%, #fff 0 50%, #ccc 0 75%, #fff 0) 0 0 / 16px 16px; }
.viewer-foot { display: flex; align-items: center; height: 23px; padding: 0 0 1px 5px; border-top: 1px solid #181818; color: #b0b0b0; }
select { appearance: none; height: 18px; padding-left: 6px; border: 1px solid #303030; border-radius: 3px; background: #1a1a1a url("data:image/svg+xml,%3Csvg xmlns='http://www.w3.org/2000/svg' width='9' height='6'%3E%3Cpath d='M1 1l3.500 3.500L8 1' fill='none' stroke='%23999' stroke-width='1.200'/%3E%3C/svg%3E") right 4px center no-repeat; color: var(--lit); font-size: 11px; }
.zoom-level { width: 69px; }
.quality { width: 87px; }
.bar { width: 2px; height: 14px; margin: 0 4px; background: #303030; }
.vb { width: 22px; height: 18px; display: grid; place-items: center; }
.vb.on { color: var(--blue); background: #161616; border-radius: 3px; }
.vb.off { color: #444; }
.exposure { color: var(--blue); width: 35px; text-align: left; padding-left: 3px; font-size: 11px; }
.timebox { width: 70px; height: 18px; border: 1px solid #303030; border-radius: 3px; font-size: 11px; line-height: 15px; color: #909090; }

.side { padding: 0 11px 0 1px; }
.side-tab { height: 30px; padding-left: 11px; text-align: left; border-bottom: 2px solid #171717; color: #8a8a8a; font-size: 11px; flex: none; }
.side-tab:first-child { height: 29px; }
.align { height: 129px; padding: 0 2px 0 6px; border-bottom: 1px solid #171717; }
.align-head { display: flex; justify-content: space-between; align-items: center; height: 32px; padding: 0 7px 2px 5px; color: var(--lit); }
.align-to { display: flex; justify-content: space-between; align-items: center; padding-left: 1px; white-space: nowrap; color: #8a8a8a; font-size: 11px; }
.align-to select { width: 110px; }
.align-row { display: flex; justify-content: space-between; padding: 5px 4px 0; color: #b0b0b0; }
.align-row:last-child { padding-top: 1px; }
.align-row.off { color: #404040; }
.distribute { margin: 4px 2px 0 0; padding: 0 0 0 1px; border-top: 2px solid #303030; font-size: 11px; line-height: 18px; }

.timeline { flex: 364 1 0; display: flex; flex-direction: column; margin: 0 1px; border: 1px solid var(--blue); background: var(--bg); min-width: 0; }
.tl-tabs { display: flex; height: 26px; padding-left: 28px; flex: none; }
.queue { color: #858585; width: 103px; text-align: left; font-size: 11px; }
.tl-tab { display: flex; align-items: center; gap: 11px; width: 104px; color: var(--lit); border-bottom: 2px solid #b8b8b8; white-space: nowrap; }
.tl-tab svg:first-child { margin-right: -7px; color: #8c8c8c; }
.tl-body { flex: 1; display: grid; grid-template-columns: 774px minmax(0, 1fr) 17px; }
.tl-left { border-right: 1px solid #000; min-width: 0; }
.tl-head { display: flex; align-items: center; height: 36px; }
.clock { width: 110px; display: flex; flex-direction: column; align-items: center; color: #1b568f; }
.clock strong { font: bold 12px/15px "DejaVu Sans", sans-serif; color: var(--blue); }
.clock span { font-size: 11px; line-height: 13px; }
.tl-head .search { width: 495px; }
.tl-switches { display: flex; align-items: center; gap: 11px; margin-left: 16px; color: #b0b0b0; }
.tl-switches button:nth-child(2) { margin-left: 6px; }
.tl-switches button:last-child { margin-left: 7px; }

.w-av { width: 67px; } .w-tag { width: 32px; } .w-num { width: 33px; } .w-sw { width: 136px; }
.w-mode { width: 50px; } .w-t { width: 25px; } .w-track { width: 92px; } .w-parent { width: 116px; } .w-end { width: 17px; }
.layers th { background: linear-gradient(#0c0c0c, #0c0c0c) 0 50% / 1px 11px no-repeat; }
.layers th:first-child, .layers th.t, .layers th.t + th { background: none; }
.layers tbody tr { background: #474747; }
.layers .num { padding-left: 8px; color: #a8a8a8; font-size: 11px; }
.layers .src { padding-left: 6px; }
.layers .t { padding-left: 9px; color: #8f8068; font-size: 11px; }
.av { display: grid; grid-template-columns: repeat(4, 15px); padding-left: 3px; align-items: center; justify-items: center; }
.sw { display: grid; grid-template-columns: repeat(8, 15px); padding-left: 4px; align-items: center; justify-items: center; }
.sw em { font: italic 13px/14px "Liberation Serif", serif; }
.box { width: 13px; height: 13px; background: #333; display: grid; place-items: center; }
.boxes { color: #b8b8b8; }
.tagcell { display: flex; justify-content: flex-end; padding-right: 5px; }
.tagcell.filled { justify-content: space-between; align-items: center; padding: 0 0 0 6px; }
.tagcell i { width: 14px; height: 14px; background: var(--green); }
.layers .file { padding-left: 6px; gap: 5px; }
.layers .file span { padding-left: 4px; }
.track-head { display: flex; align-items: center; gap: 4px; }
.track-head span { flex: 1; font-size: 11px; }
.track-head svg:last-child { margin-right: 4px; }
.parent { display: flex; align-items: center; justify-content: space-between; padding: 0 3px 0 4px; color: #999; }
.parent select { width: 90px; height: 16px; border: 0; border-radius: 0; line-height: 14px; font-size: 12px; }

.tl-right { position: relative; display: flex; flex-direction: column; overflow: hidden; padding-top: 7px; }
.navigator, .workarea { display: grid; grid-template-columns: 7px minmax(0, 1fr) 7px; }
.navigator { height: 9px; border-top: 1px solid #000; border-bottom: 1px solid #000; }
.cap { background: var(--blue); border-radius: 5px 0 0 5px; margin-right: 2px; }
.cap.end { border-radius: 0 5px 5px 0; margin: 0 0 0 1px; }
.navigator .range { background: #666; }
.ruler { display: grid; grid-template-columns: repeat(12, minmax(0, 1fr)) 0; margin: 0 7px; height: 20px; font-size: 11px; line-height: 13px; color: #bbb; }
.ruler span { width: 30px; margin-left: -15px; text-align: center; background: linear-gradient(#888, #888) 50% 100% / 1px 4px no-repeat; white-space: nowrap; }
.workarea { height: 19px; border-top: 1px solid #000; }
.workarea .range { background: #616161; border-top: 1px solid #777; border-bottom: 4px solid #17c020; }
.workarea .cap.end, .workarea .cap { margin-bottom: 4px; }
.layer-track { height: 20px; padding: 1px 7px; border-top: 1px solid #000; border-bottom: 1px solid #2a2a2a; background: #4c4c4c; }
.clip { height: 17px; background: linear-gradient(#a9bba7, #90a68f); border-top: 1px solid #d2d8d0; border-bottom: 1px solid #7c937b; border-radius: 4px 4px 0 0; }
.empty-track { flex: 1; margin: 0 7px; background: #323232; }
.playhead { position: absolute; top: 20px; bottom: 0; left: 2px; width: 11px; background: linear-gradient(var(--blue), var(--blue)) 5px 0 / 1px 100% no-repeat; }
.tl-gutter { padding: 38px 0 0 1px; display: flex; flex-direction: column; gap: 7px; color: #b0b0b0; }
.tl-foot { display: flex; align-items: center; height: 17px; padding-left: 7px; gap: 7px; color: #aaa; border-top: 1px solid #000; flex: none; }
.tl-foot .blue { color: var(--blue); }
.tl-foot .blue svg { background: #161616; }
.render { margin-left: 19px; width: 669px; font-size: 11px; color: var(--lit); }
.render span { color: #4fd69c; }
.scale { display: flex; align-items: center; gap: 8px; }
.scale input { appearance: none; width: 52px; height: 10px; background: linear-gradient(#484848, #484848) 0 50% / 100% 2px no-repeat; }
.scale input::-webkit-slider-thumb { appearance: none; width: 9px; height: 9px; border: 2px solid #999; border-radius: 50%; background: #232323; }
```
